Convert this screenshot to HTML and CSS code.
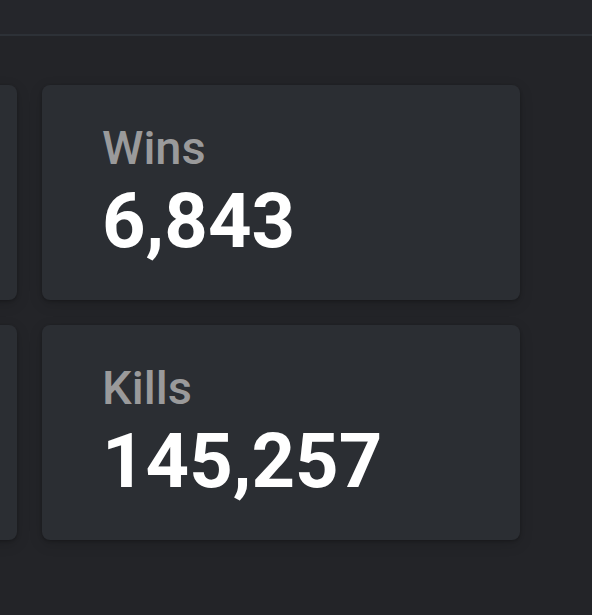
FILE: index.html
```html
<!DOCTYPE html>
<html lang="en">

<head>
    <meta charset="UTF-8">
    <meta name="viewport" content="width=device-width, initial-scale=1.0">
    <title>Stats</title>
    <link rel="stylesheet" href="styles.css">
</head>

<body>
    <!-- 顶部栏 -->
    <div class="topbar"></div>

    <!-- 统计卡片 -->
    <div class="stats">
        <div class="card">
            <p class="label">Games</p>
            <p class="value">21,406</p>
        </div>
        <div class="card">
            <p class="label">Wins</p>
            <p class="value">6,843</p>
        </div>
        <div class="card">
            <p class="label">Deaths</p>
            <p class="value">98,112</p>
        </div>
        <div class="card">
            <p class="label">Kills</p>
            <p class="value">145,257</p>
        </div>
    </div>
</body>

</html>
```

FILE: styles.css
```css
* {
    margin: 0;
    padding: 0;
    box-sizing: border-box;
}

html,
body {
    height: 100%;
}

body {
    background-color: #232428;
    font-family: Roboto, "Liberation Sans", Arial, sans-serif;
    overflow: hidden;
}

.topbar {
    height: 36px;
    background-color: #25262b;
    border-bottom: 2px solid #2d3137;
}

.stats {
    display: grid;
    grid-template-columns: repeat(2, 478px);
    gap: 25px;
    margin-left: -461px;
    padding-top: 49px;
}

.card {
    height: 215px;
    padding: 35px 60px 0;
    background-color: #2b2e33;
    border-radius: 8px;
    box-shadow: 0 1px 3px rgba(0, 0, 0, .25), 0 4px 14px rgba(0, 0, 0, .15);
}

.label {
    font-size: 47px;
    line-height: 1.2;
    font-weight: 500;
    color: #9a9a9b;
}

.value {
    font-size: 76px;
    line-height: 1.2;
    font-weight: 700;
    color: #fff;
}
```
